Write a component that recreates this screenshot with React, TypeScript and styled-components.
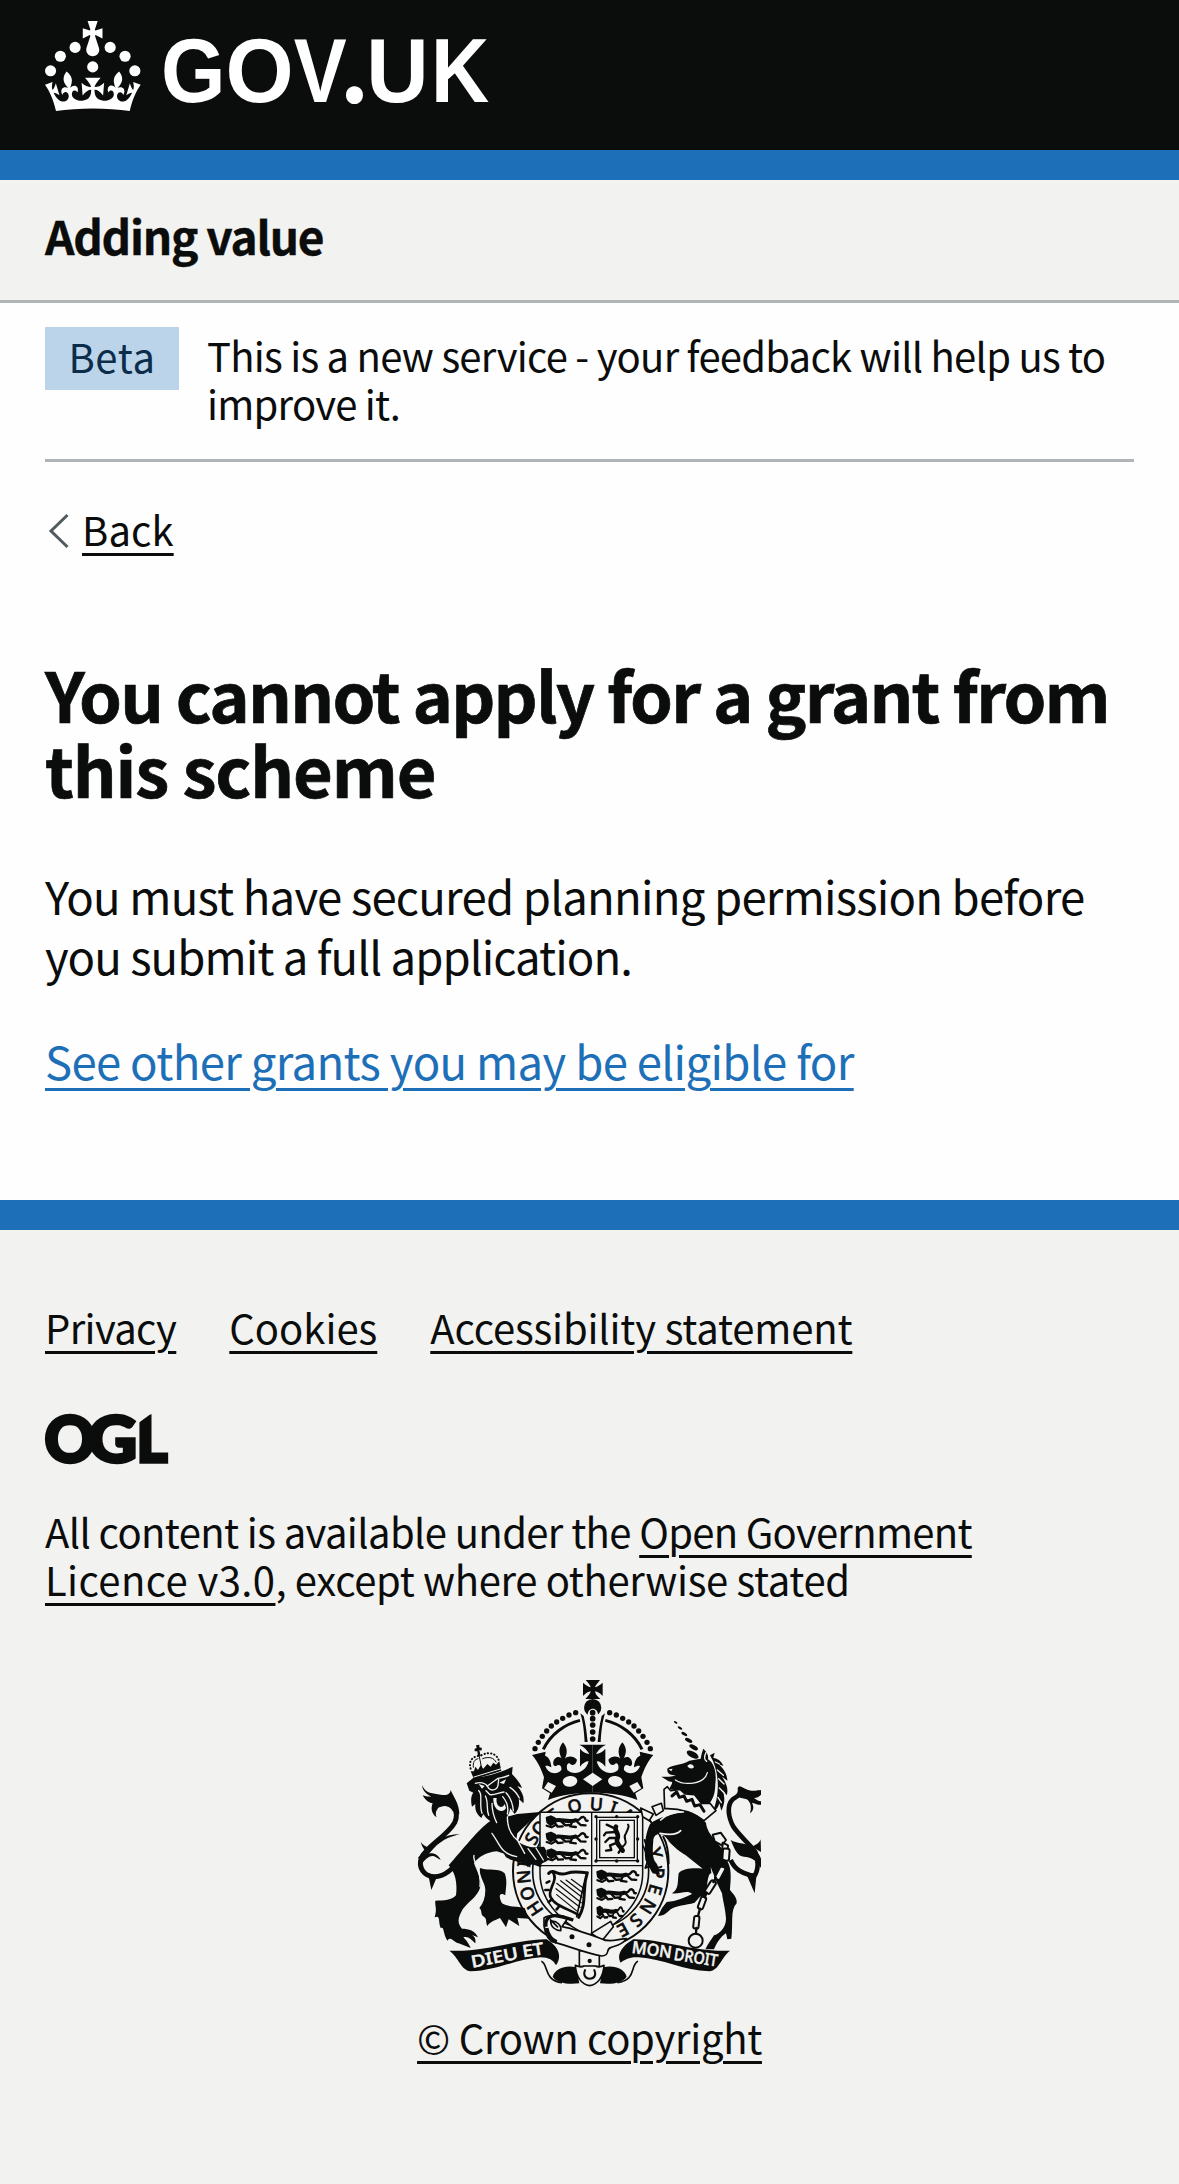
import React from "react";
import styled, { createGlobalStyle } from "styled-components";

const INK = "#0b0c0c";
const BLUE = "#1d70b8";
const TINT = "#f2f2f0";
const RULE = "#b1b4b6";
const SANS = '"Noto Sans CJK SC", "Open Sans", sans-serif';

const GlobalStyle = createGlobalStyle`
  body {
    margin: 0;
    background: #fefefe;
    color: ${INK};
    font-family: ${SANS};
    -webkit-font-smoothing: antialiased;
  }
`;

const Page = styled.div`
  display: flex;
  flex-direction: column;
  min-height: 2184px;
`;

const Header = styled.header`
  display: flex;
  align-items: flex-start;
  box-sizing: border-box;
  height: 150px;
  padding: 21px 45px 0;
  background: ${INK};
`;

const ServiceBar = styled.div`
  padding: 25px 45px 35px;
  border-top: 30px solid ${BLUE};
  border-bottom: 3px solid ${RULE};
  background: ${TINT};
`;

const ServiceName = styled.div`
  font-size: 46px;
  font-weight: 700;
  line-height: 60px;
  letter-spacing: -1.25px;
  -webkit-text-stroke: 0.4px ${INK};
`;

const Container = styled.div`
  display: flex;
  flex-direction: column;
  align-items: flex-start;
  padding: 0 45px;
`;

const PhaseBanner = styled.div`
  display: flex;
  align-items: flex-start;
  gap: 29px;
  align-self: stretch;
  box-sizing: border-box;
  height: 159px;
  padding-top: 24px;
  border-bottom: 3px solid ${RULE};
`;

const Tag = styled.strong`
  flex: none;
  box-sizing: border-box;
  width: 134px;
  padding-bottom: 5px;
  background: #bbd4ea;
  color: #0c2d4a;
  font-size: 40px;
  font-weight: 400;
  line-height: 58px;
  letter-spacing: 0.6px;
  text-align: center;
`;

const PhaseText = styled.p`
  margin: 4px 0 0 -1px;
  font-size: 40px;
  line-height: 48px;
  letter-spacing: -0.75px;
`;

const Back = styled.div`
  display: flex;
  align-items: center;
  gap: 13px;
  margin: 43px 0 0 4px;
  height: 48px;
`;

const Link = styled.a<{ $size?: number; $spacing?: number; $colour?: string; $offset?: number }>`
  color: ${(p) => p.$colour ?? INK};
  font-size: ${(p) => p.$size ?? 40}px;
  letter-spacing: ${(p) => p.$spacing ?? -0.5}px;
  text-decoration: underline;
  text-decoration-thickness: 3px;
  text-underline-offset: ${(p) => p.$offset ?? 7}px;
`;

const Tracked = styled.span<{ $spacing: number }>`
  letter-spacing: ${(p) => p.$spacing}px;
`;

const Heading = styled.h1`
  margin: 103px 0 59px;
  font-size: 68.6px;
  font-weight: 700;
  line-height: 75px;
  letter-spacing: -1.8px;
  white-space: nowrap;
  -webkit-text-stroke: 0.7px ${INK};
`;

const Body = styled.p`
  margin: 0 0 45px;
  font-size: 45.5px;
  line-height: 60px;
  letter-spacing: -0.79px;
  white-space: nowrap;
`;

const Footer = styled.footer`
  display: flex;
  flex: 1;
  flex-direction: column;
  align-items: flex-start;
  margin-top: 65px;
  padding: 73px 45px 0;
  border-top: 30px solid ${BLUE};
  background: ${TINT};
  line-height: 48px;
`;

const FooterNav = styled.nav`
  display: flex;
  gap: 53px;
  margin-bottom: 63px;
`;

const Licence = styled.p`
  margin: 43px 0 77px;
  font-size: 40px;
  line-height: 48px;
  letter-spacing: -0.61px;
`;

const Copyright = styled.div`
  display: flex;
  flex-direction: column;
  align-items: center;
  align-self: center;
  gap: 27px;
`;

const Art = styled.svg<{ $drop?: number }>`
  display: block;
  flex: none;
  margin-top: ${(p) => p.$drop ?? 0}px;
  overflow: visible;
`;

function GovLogo() {
  return (
    <Art width="450" height="90" viewBox="0 0 450 90" fill="#fff">
      <g transform="scale(1.505 1.5)">
        <circle cx="20" cy="17.6" r="3.7" />
        <circle cx="10.2" cy="23.5" r="3.7" />
        <circle cx="3.7" cy="33.2" r="3.7" />
        <circle cx="31.7" cy="30.6" r="3.7" />
        <circle cx="43.3" cy="17.6" r="3.7" />
        <circle cx="53.2" cy="23.5" r="3.7" />
        <circle cx="59.7" cy="33.2" r="3.7" />
        <path d="M33.1,9.8c.2-.1.3-.3.5-.5l4.6,2.4v-6.8l-4.6,1.5c-.1-.2-.3-.3-.5-.5l1.9-5.9h-6.7l1.9,5.9c-.2.1-.3.3-.5.5l-4.6-1.5v6.8l4.6-2.4c.1.2.3.3.5.5l-2.6,8c-.9,2.8,1.2,5.7,4.1,5.7h0c3,0,5.1-2.9,4.1-5.7l-2.6-8ZM37,37.9s-3.4,3.8-4.1,6.1c2.2,0,4.2-.5,6.4-2.8l-.7,8.5c-2-2.8-4.4-4.1-5.7-3.8.1,3.1.5,6.7,5.8,7.2,3.7.3,6.7-1.5,7-3.8.4-2.6-2-4.3-3.7-1.6-1.4-4.5,2.4-6.1,4.9-3.2-1.9-4.5-1.8-7.7,2.4-10.9,3,4,2.6,7.3-1.2,11.1,2.4-1.3,6.2,0,4,4.6-1.2-2.8-3.7-2.2-4.2.2-.3,1.7.7,3.7,3,4.2,1.9.3,4.7-.9,7-5.9-1.3,0-2.4.7-3.9,1.7l2.4-8c.6,2.3,1.4,3.7,2.2,4.5.6-1.6.5-2.8,0-5.3l5,1.8c-2.6,3.6-5.2,8.7-7.3,17.5-7.4-1.1-15.7-1.7-24.5-1.7h0c-8.8,0-17.1.6-24.5,1.7-2.1-8.9-4.7-13.9-7.3-17.5l5-1.8c-.5,2.5-.6,3.7,0,5.3.8-.8,1.6-2.3,2.2-4.5l2.4,8c-1.5-1-2.6-1.7-3.9-1.7,2.3,5,5.2,6.2,7,5.9,2.3-.4,3.3-2.4,3-4.2-.5-2.4-3-3.1-4.2-.2-2.2-4.6,1.6-6,4-4.6-3.7-3.7-4.2-7.1-1.2-11.1,4.2,3.2,4.3,6.4,2.4,10.9,2.5-2.8,6.3-1.3,4.9,3.2-1.8-2.7-4.1-1-3.7,1.6.3,2.3,3.3,4.1,7,3.8,5.4-.5,5.7-4.2,5.8-7.2-1.3-.2-3.7,1-5.7,3.8l-.7-8.5c2.2,2.3,4.2,2.7,6.4,2.8-.7-2.3-4.1-6.1-4.1-6.1h10.6,0Z" />
      </g>
      <g fontFamily='"Liberation Sans", Arial, sans-serif' fontWeight="700" fontSize="91.5">
        <text x="116" y="80.8" textLength="64.5" lengthAdjust="spacingAndGlyphs">G</text>
        <text x="180.4" y="80.8" textLength="68.1" lengthAdjust="spacingAndGlyphs">O</text>
        <text x="248.7" y="80.8" textLength="52.9" lengthAdjust="spacingAndGlyphs">V</text>
        <text x="294.5" y="82" fontFamily={SANS} fontSize="92">.</text>
        <text x="321.3" y="80.8" textLength="62.4" lengthAdjust="spacingAndGlyphs">U</text>
        <text x="386.1" y="80.8" textLength="58.2" lengthAdjust="spacingAndGlyphs">K</text>
      </g>
    </Art>
  );
}

function OglLogo() {
  return (
    <Art width="123" height="50" viewBox="0 0 123 50" fill={INK} stroke={INK}>
      <g fontFamily='Lato, "Open Sans", sans-serif' fontWeight="900" fontSize="63" strokeWidth="3.4">
        <text x="-0.6" y="47.6" textLength="51" lengthAdjust="spacingAndGlyphs">O</text>
        <text x="43" y="47.6" textLength="49" lengthAdjust="spacingAndGlyphs">G</text>
        <text x="91.5" y="47.6" textLength="31" lengthAdjust="spacingAndGlyphs">L</text>
      </g>
      <path d="M92 -2 L108.5 -2 L92 10 Z" fill={TINT} stroke="none" />
    </Art>
  );
}

const MOTTO = { fontFamily: '"Noto Sans", sans-serif', fontWeight: 500 };

function HeraldicLion() {
  return (
    <g fill="none" stroke={INK} strokeLinecap="round" strokeLinejoin="round">
      <path d="M2 6 L14 2 L26 8 L24 22 L13 28 L4 20 Z" fill={INK} strokeWidth="6" />
      <path d="M24 15 C45 8 60 22 84 14" strokeWidth="12" />
      <path d="M24 20 L34 33 L48 32 M44 17 L56 29 L66 28 M76 16 L70 32 L86 34 M86 14 L100 28 L114 29" strokeWidth="7" />
      <path d="M86 12 C100 18 96 2 108 4 C118 8 110 18 120 15" strokeWidth="7" />
      <path d="M2 30 L16 35 L26 29" strokeWidth="6.5" />
    </g>
  );
}

const archDots = [
  [527, 158], [507, 165], [488, 175], [470, 186], [454, 198], [440, 213], [427, 229], [415, 247], [405, 266],
];

function CrownHalf() {
  return (
    <g>
      {archDots.map(([x, y]) => (
        <circle key={x} cx={x} cy={y} r="8" />
      ))}
      <path d="M540 181 C495 192 452 222 430 268" fill="none" stroke={INK} strokeWidth="9" />
      <path d="M541 160 L551 168 C558 195 560 220 563 246 L554 246 C552 215 550 190 541 160 Z" />
      <path d="M396 285 L437 275 L435 287 C445 290 453 302 454 322 C447 318 441 316 436 318 C445 342 470 346 484 330 C486 318 478 310 468 318 C458 322 455 300 470 292 C477 289 484 293 485 296 C479 280 472 268 489 247 C506 268 500 282 495 296 C502 288 520 286 531 299 C529 315 515 319 509 310 C503 308 498 316 502 330 C518 346 556 342 566 304 C556 304 548 310 540 320 L540 266 C548 276 558 280 568 282 C560 268 552 260 538 254 L578 254 L578 398 C530 398 480 404 444 420 L450 400 L426 385 L432 352 C424 328 414 305 396 285 Z" />
      <path d="M444 366 L468 378 L455 398 L432 385 Z" fill={TINT} />
      <ellipse cx="510" cy="364" rx="22" ry="16" fill={TINT} transform="rotate(-6 510 364)" />
    </g>
  );
}

function Crown() {
  return (
    <g fill={INK}>
      <path d="M557 60 H600 C590 72 586 78 585 82 C592 80 599 76 608 68 V108 C598 98 592 95 585 94 C586 102 592 110 601 117 H556 C565 108 571 101 572 94 C565 95 558 99 549 108 V68 C558 76 565 80 572 82 C571 76 566 70 557 60 Z" />
      <circle cx="578" cy="143" r="26" />
      <CrownHalf />
      <g transform="translate(1156 0) scale(-1 1)">
        <CrownHalf />
      </g>
      <path d="M563 165 C563 140 594 140 594 165 L590 248 H566 Z" fill={TINT} />
      {[158, 176, 195, 216, 237].map((y) => (
        <circle key={y} cx="578" cy={y} r="8.5" />
      ))}
      <path d="M578 338 L607 358 L578 378 L549 358 Z" fill={TINT} />
    </g>
  );
}

function Garter() {
  return (
    <g>
      <circle cx="572" cy="633" r="233" fill={TINT} stroke={INK} strokeWidth="6" />
      <circle cx="572" cy="633" r="174" fill={TINT} stroke={INK} strokeWidth="5" />
      <path id="garter-motto" d="M572 815 A182 182 0 1 1 572.1 815" fill="none" />
      <g fill={INK} stroke={INK} strokeWidth="1.6" fontSize="54" style={MOTTO}>
        <text><textPath href="#garter-motto" startOffset="158" textLength="156">HONI</textPath></text>
        <text><textPath href="#garter-motto" startOffset="362" textLength="72">SO</textPath></text>
        <text><textPath href="#garter-motto" startOffset="446">T</textPath></text>
        <text><textPath href="#garter-motto" startOffset="506" textLength="138">QUI</textPath></text>
        <text><textPath href="#garter-motto" startOffset="660">A</textPath></text>
        <text><textPath href="#garter-motto" startOffset="792">Y</textPath></text>
        <text><textPath href="#garter-motto" startOffset="846" textLength="220">PENSE</textPath></text>
      </g>
    </g>
  );
}

function Shield() {
  return (
    <g>
      <path d="M420 457 H728 V640 C728 730 650 800 575 832 C498 800 420 730 420 640 Z" fill={TINT} stroke={INK} strokeWidth="4.5" />
      <path d="M575 457 V832 M420 617 H728" stroke={INK} strokeWidth="4" />
      <g transform="translate(438 467) scale(1.04 1)"><HeraldicLion /></g>
      <g transform="translate(438 516) scale(1.04 1)"><HeraldicLion /></g>
      <g transform="translate(440 566) scale(1.02 1)"><HeraldicLion /></g>
      <g transform="translate(590 630) scale(1.04 1.02)"><HeraldicLion /></g>
      <g transform="translate(590 684) scale(.98 1.02)"><HeraldicLion /></g>
      <g transform="translate(590 738) scale(.68 1.05)"><HeraldicLion /></g>
      <rect x="590" y="472" width="122" height="130" fill="none" stroke={INK} strokeWidth="4" />
      <rect x="599" y="481" width="104" height="112" fill="none" stroke={INK} strokeWidth="4" />
      <g fill={INK}>
        {[[588, 470], [650, 470], [713, 470], [588, 537], [713, 537], [588, 603], [650, 603], [713, 603]].map(([x, y]) => (
          <circle key={`${x}-${y}`} cx={x} cy={y} r="5" />
        ))}
      </g>
      <g fill="none" stroke={INK} strokeLinecap="round" strokeLinejoin="round">
        <path d="M648 500 C640 512 660 520 652 536 C645 548 662 560 668 572" strokeWidth="14" />
        <path d="M644 505 L620 494 M646 516 L618 518 L612 526 M650 534 L628 534 L616 546 M652 548 L630 556 L634 570 L618 572 M666 562 L656 578" strokeWidth="7" />
        <path d="M668 560 C690 545 664 535 678 520 C682 508 690 500 684 494" strokeWidth="6" />
        <path d="M446 640 C462 624 472 650 500 640 C530 630 545 640 562 638 L556 662 C550 710 556 740 536 772" strokeWidth="9" />
        <path d="M552 670 L530 770" strokeWidth="5" />
        <path d="M458 636 C478 660 440 690 452 712 C462 735 500 745 534 764" strokeWidth="8" />
        <path d="M448 664 L440 668 M446 690 L436 690 M456 718 L446 726 M478 738 L470 748" strokeWidth="8" />
        <path d="M470 670 L544 728 M468 686 L540 742 M470 704 L532 754 M482 662 L546 712 M498 660 L548 698 M514 658 L550 684" strokeWidth="3.5" />
      </g>
    </g>
  );
}

function LionSupporter() {
  return (
    <g fill={INK} strokeLinecap="round" strokeLinejoin="round">
      <path d="M186 588 C160 628 134 650 104 650 C72 650 54 622 64 594 C78 560 142 528 164 488 C180 452 154 420 118 434" fill="none" stroke={INK} strokeWidth="15" />
      <path d="M66 376 C78 402 98 400 122 404 C142 408 150 402 152 390 C160 410 178 430 178 462 L158 452 C150 436 132 434 118 440 C106 452 106 462 110 472 C94 462 92 444 98 430 C84 428 74 418 68 406 C78 410 88 410 94 410 C78 402 68 392 66 376 Z" />
      <path d="M180 522 C160 528 130 534 100 566 L84 584 C76 574 66 562 62 546 C70 556 78 560 86 562 C100 544 130 524 180 522 Z" />
      <path d="M54 592 C74 578 110 570 122 600 L108 592 C92 580 74 600 66 612 Z" />
      <path d="M84 640 L94 690 L112 648 Z" />
      <path d="M270 484 C236 506 186 572 146 616 C168 640 172 672 168 706 C158 720 130 722 106 722 C104 738 112 744 104 772 C122 764 114 784 122 804 C134 800 128 820 142 842 C152 826 160 846 176 850 L212 864 C204 846 196 838 190 832 C206 828 214 840 226 850 C228 836 224 828 214 824 L234 832 C226 812 206 806 186 806 C172 790 172 776 188 748 C206 724 232 710 240 684 C246 660 232 636 222 610 C236 590 258 578 290 574 L340 590 L352 520 L420 456 L352 462 Z" />
      <path d="M240 624 C268 634 296 622 314 640 C324 664 316 690 316 706 C296 694 296 712 306 730 C326 742 352 738 374 744 C380 756 380 768 388 776 L352 774 L358 798 L326 778 L318 802 L300 774 C280 782 268 788 262 798 C256 786 262 778 252 770 C240 766 248 752 238 744 C250 730 256 712 256 690 C256 668 236 650 240 624 Z" />
      <path d="M322 508 C340 540 372 556 400 562 L432 560 C444 574 438 588 444 600 C438 608 420 606 424 622 C404 616 392 606 384 622 C372 604 340 606 318 592 C304 568 292 548 276 520 Z" />
      <path d="M322 470 C322 520 350 552 396 560 M276 520 C300 552 300 580 350 590 M352 540 L374 580 M384 566 L408 598 M408 564 L430 600" fill="none" stroke={TINT} strokeWidth="4" />
      <path d="M222 586 C216 606 246 624 240 680" fill="none" stroke={TINT} strokeWidth="4" />
      <path d="M200 370 L222 352 C256 352 300 338 338 320 L336 342 C350 356 362 372 366 384 L352 378 C366 396 374 410 370 430 L356 416 C360 436 354 452 344 462 L330 444 C330 462 318 480 296 484 L288 494 C270 484 258 476 250 462 L244 474 C230 462 224 450 226 432 L216 440 C212 424 212 408 220 398 L208 392 Z" />
      <g fill="none" stroke={TINT} strokeWidth="4">
        <path d="M226 370 C240 366 254 368 262 378 L292 356 C304 352 316 352 326 346" />
        <path d="M262 378 C270 396 290 392 294 376 L296 358 M258 392 L270 404 C284 406 296 398 312 396" />
        <path d="M236 392 C250 402 236 430 246 460 M256 408 C266 426 258 446 266 466 M276 430 C276 448 280 468 290 488" />
        <path d="M318 398 C330 410 338 430 340 452 M308 410 C320 424 326 444 322 462 M330 382 C342 390 352 402 358 414" />
      </g>
      <path d="M280 414 L290 414 C286 438 306 450 314 432 L318 444 C310 462 278 454 280 414 Z M236 372 L254 378 L246 386 Z M298 368 L318 358 L312 372 Z" fill={TINT} />
      <g>
        <path d="M212 334 L222 358 C248 348 274 344 304 332 L298 304 L288 314 L280 308 L272 320 L262 312 L250 326 L242 316 L234 330 L226 320 L222 334 Z" />
        <path d="M228 256 L238 254 L238 262 L246 264 L244 272 L238 270 L242 288 L234 290 L232 274 L224 274 L224 266 L230 264 Z" />
        <path d="M212 326 C206 306 214 292 234 288 M244 286 C270 272 292 282 298 306" fill="none" stroke={INK} strokeWidth="6" strokeDasharray="1 9" />
        <path d="M220 322 C218 306 224 298 234 296 M248 296 C268 288 282 294 288 306 M238 290 L244 320" fill="none" stroke={INK} strokeWidth="3" />
        <path d="M222 351 L304 326" stroke={TINT} strokeWidth="3" />
      </g>
    </g>
  );
}

const hornMarks: [number, number, number][] = [
  [827, 187, 4], [840, 204, 5], [853, 222, 6.5], [866, 241, 8], [881, 262, 9.5], [878, 284, 13],
];

function UnicornSupporter() {
  return (
    <g fill={INK} strokeLinecap="round" strokeLinejoin="round">
      {hornMarks.map(([x, y, r]) => (
        <ellipse key={y} cx={x} cy={y} rx={r * 1.5} ry={r * 0.7} transform={`rotate(28 ${x} ${y})`} />
      ))}
      <path d="M802 326 C812 314 846 316 868 302 L902 296 C904 284 906 276 910 266 C922 276 926 288 924 298 C944 310 950 340 946 372 C946 412 930 434 914 440 C884 410 850 392 808 388 C812 376 818 372 816 366 L806 364 L784 350 C796 350 812 352 828 346 C812 346 800 342 802 326 Z" />
      <path d="M862 318 C868 310 880 312 882 322 C876 328 866 326 862 318 Z M806 328 L818 326 L814 334 Z" fill={TINT} />
      <path d="M826 360 C850 376 912 376 922 338 M918 278 C912 290 914 300 920 304" fill="none" stroke={TINT} strokeWidth="4" />
      <path d="M930 286 L944 278 L940 294 C956 296 966 306 970 318 L956 312 C970 326 982 342 982 362 L966 350 C980 370 986 390 980 406 L968 390 C976 416 974 432 964 452 L958 430 C954 444 948 452 938 456 C958 410 962 340 930 286 Z" />
      <path d="M946 306 L958 312 M952 330 L970 346 M956 356 L972 372 M958 384 L972 398 M954 412 L964 428" fill="none" stroke={TINT} strokeWidth="4" />
      <path d="M792 388 L802 380 L812 392 L840 388 L856 402 L884 404 L904 430 L930 430 L948 452 L912 482 C880 458 840 444 794 446 Z" fill={TINT} stroke={INK} strokeWidth="5" />
      <path d="M816 408 L830 396 L838 412 L852 408 L860 424 L876 418 L884 438 L900 434 L912 454" fill="none" stroke={INK} strokeWidth="9" />
      <path d="M722 444 L760 462 L748 482 L728 470 Z M756 440 L784 430 L790 452 L768 466 Z" fill={TINT} stroke={INK} strokeWidth="5" />
      <path d="M736 600 C732 560 736 520 750 492 C770 472 820 462 860 452 C884 458 904 474 918 488 C922 528 960 548 974 580 C980 606 960 612 944 616 L934 622 C920 618 912 600 900 596 L872 590 C840 580 820 560 796 530 C780 516 762 522 760 540 C758 566 756 590 766 606 C776 616 776 632 780 644 L758 640 Z" />
      <path d="M782 480 C800 462 826 456 850 456 M780 520 C800 524 830 526 842 512" fill="none" stroke={TINT} strokeWidth="5" />
      <path d="M734 540 C748 580 744 610 736 624 C752 612 772 630 784 620 M790 530 C806 560 806 590 806 610" fill="none" stroke={INK} strokeWidth="6" />
      <path d="M800 540 C860 580 900 600 930 600 L934 640 C920 640 924 690 912 718 C904 700 900 712 884 728 C856 736 830 736 812 748 C800 758 794 768 774 768 L786 744 L800 726 C830 724 856 712 876 702 C862 688 838 704 816 700 C838 688 832 664 836 640 C850 624 880 624 908 626 Z" />
      <path d="M968 590 C1000 610 992 660 990 690 C1004 706 1012 716 1010 730 C990 750 1000 790 994 836 L982 838 L978 820 C960 832 950 850 942 868 L916 868 C924 850 934 840 942 826 C962 820 978 800 978 776 C976 744 968 720 966 700 C946 660 940 640 930 616 Z" />
      <path d="M1080 397 C1064 402 1044 400 1020 386 C1024 404 1010 410 998 418 C980 436 984 470 1000 500 C1020 530 1046 548 1066 576 C1076 600 1076 630 1062 650 C1040 640 1010 640 992 600" fill="none" stroke={INK} strokeWidth="14" strokeLinecap="butt" />
      <path d="M1083 390 C1060 398 1036 396 1020 386 L1014 412 L1040 418 C1052 426 1056 442 1050 460 C1062 450 1062 440 1056 428 C1070 432 1076 436 1083 434 L1083 424 C1076 424 1068 418 1062 414 C1070 414 1078 410 1083 404 Z" />
      <path d="M992 540 C1010 552 1036 546 1054 562 C1070 574 1080 584 1083 596 L1083 624 C1070 600 1050 590 1032 590 C1014 590 1004 570 992 540 Z M1038 640 L1064 700 L1070 640 Z M1056 560 C1066 556 1080 548 1082 538 L1083 576 Z" />
      <g fill={TINT} stroke={INK} strokeWidth="6">
        <path d="M938 524 L962 518 L978 540 L966 556 L944 544 Z M968 548 L984 556 L982 586 L966 582 Z" />
        <rect x="968" y="566" width="20" height="36" rx="6" transform="rotate(4 978 584)" />
        <rect x="952" y="618" width="17" height="42" rx="6" transform="rotate(28 960 639)" />
        <rect x="923" y="660" width="17" height="42" rx="6" transform="rotate(32 931 681)" />
        <rect x="898" y="710" width="16" height="38" rx="6" transform="rotate(20 906 729)" />
        <rect x="881" y="768" width="16" height="38" rx="6" transform="rotate(6 889 787)" />
        <circle cx="887" cy="842" r="21" />
      </g>
      <path d="M972 600 L966 620 M948 654 L940 666 M920 698 L914 712 M900 746 L894 768 M889 804 L888 820" stroke={INK} strokeWidth="7" />
    </g>
  );
}

function Scroll() {
  return (
    <g>
      <g fill={INK}>
        <path d="M148 872 C250 878 360 836 440 838 C470 856 490 884 468 916 C460 900 446 892 422 892 C350 896 290 932 212 934 C182 930 176 892 148 872 Z" />
        <path d="M990 872 C888 878 780 836 700 838 C668 856 648 884 662 908 C676 898 690 890 716 892 C788 896 850 932 928 934 C958 930 964 892 990 872 Z" />
        <path d="M538 970 C500 974 470 968 458 950 C466 924 500 914 528 922 Z" />
        <path d="M600 970 C640 974 668 968 680 950 C672 924 640 914 610 922 Z" />
      </g>
      <path d="M424 904 C446 912 430 962 486 968 M714 904 C690 914 710 962 652 968" fill="none" stroke={INK} strokeWidth="5" />
      <g fill={TINT} stroke={TINT} strokeWidth="1.6" fontSize="50" style={MOTTO}>
        <text transform="translate(217 923) rotate(-11)" textLength="142" lengthAdjust="spacingAndGlyphs">DIEU</text>
        <text transform="translate(370 892) rotate(-9)" textLength="64" lengthAdjust="spacingAndGlyphs">ET</text>
        <text transform="translate(694 878) rotate(8)" textLength="120" lengthAdjust="spacingAndGlyphs">MON</text>
        <text transform="translate(820 899) rotate(9)" textLength="132" lengthAdjust="spacingAndGlyphs">DROIT</text>
      </g>
    </g>
  );
}

function Buckle() {
  return (
    <g fill={TINT} stroke={INK} strokeWidth="5" strokeLinejoin="round">
      <path d="M574 820 L632 784 L640 800 L606 842 Z" />
      <path d="M538 872 V920 H598 V872 Z" />
      <path d="M432 774 C448 762 490 764 502 776 L486 800 C520 806 560 820 604 836 C630 850 656 836 680 836 C660 860 640 858 634 862 C616 864 632 886 606 888 C556 880 500 856 454 844 C434 826 430 800 432 774 Z" />
      <path d="M438 800 C434 774 452 764 474 768 C492 770 506 776 520 780" fill="none" strokeWidth="10" />
      <path d="M440 804 C444 826 452 838 470 846" fill="none" strokeWidth="11" />
      <path d="M452 784 C470 780 486 798 482 812 C466 812 452 800 452 784 Z M450 778 L474 802" />
      <path d="M526 916 C538 922 546 922 552 918 H586 C594 922 602 922 612 916 C610 950 594 974 569 977 C544 974 528 950 526 916 Z" />
      <path d="M556 928 C548 944 556 956 569 956 C584 956 590 944 582 928" fill="none" strokeWidth="6" />
      <g fill={INK} stroke="none">
        <circle cx="516" cy="830" r="7.5" />
        <circle cx="567" cy="854" r="7.5" />
        <circle cx="569" cy="903" r="6.5" />
      </g>
    </g>
  );
}

function RoyalArms() {
  return (
    <Art width="343" height="306" viewBox="54 60 1029 918">
      <Garter />
      <Shield />
      <LionSupporter />
      <UnicornSupporter />
      <Crown />
      <Scroll />
      <Buckle />
    </Art>
  );
}

export default function App() {
  return (
    <Page>
      <GlobalStyle />
      <Header>
        <GovLogo />
      </Header>
      <ServiceBar>
        <ServiceName>Adding value</ServiceName>
      </ServiceBar>
      <Container>
        <PhaseBanner>
          <Tag>Beta</Tag>
          <PhaseText>This is a new service - your feedback will help us to improve it.</PhaseText>
        </PhaseBanner>
        <Back>
          <Art $drop={4} width="20" height="34" viewBox="0 0 20 34" fill="none" stroke="#505a5f" strokeWidth="3">
            <path d="M18.5 1 L2 17 L18.5 33" />
          </Art>
          <Link $spacing={0.1}>Back</Link>
        </Back>
        <Heading>
          You cannot apply for a grant from
          <br />
          <Tracked $spacing={-1.15}>this scheme</Tracked>
        </Heading>
        <Body>
          You must have secured planning permission before
          <br />
          <Tracked $spacing={-0.93}>you submit a full application.</Tracked>
        </Body>
        <Body as="div">
          <Link $size={45.5} $spacing={-0.65} $colour={BLUE} $offset={8}>
            See other grants you may be eligible for
          </Link>
        </Body>
      </Container>
      <Footer>
        <FooterNav>
          <Link $spacing={-0.65}>Privacy</Link>
          <Link $spacing={0}>Cookies</Link>
          <Link $spacing={-0.17}>Accessibility statement</Link>
        </FooterNav>
        <OglLogo />
        <Licence>
          All content is available under the{" "}
          <Link $spacing={-0.7}>
            Open Government
            <br />
            <Tracked $spacing={0.4}>Licence v3.0</Tracked>
          </Link>
          <Tracked $spacing={-0.35}>, except where otherwise stated</Tracked>
        </Licence>
        <Copyright>
          <RoyalArms />
          <Link $spacing={-0.3}>© Crown copyright</Link>
        </Copyright>
      </Footer>
    </Page>
  );
}
